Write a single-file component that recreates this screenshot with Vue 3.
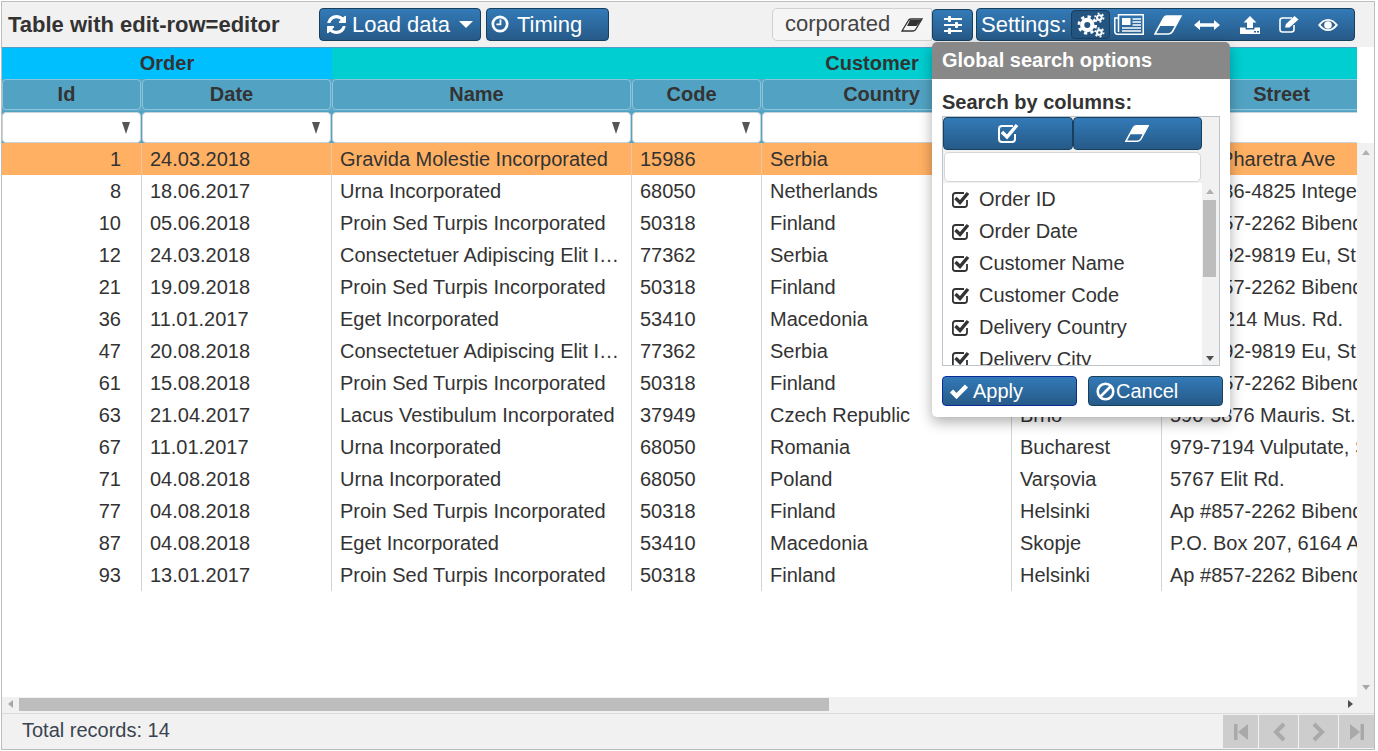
<script setup>
const rows = [
  ['1','24.03.2018','Gravida Molestie Incorporated','15986','Serbia','Belgrade','4321 Pharetra Ave'],
  ['8','18.06.2017','Urna Incorporated','68050','Netherlands','Amsterdam','Ap #686-4825 Integer Rd.'],
  ['10','05.06.2018','Proin Sed Turpis Incorporated','50318','Finland','Helsinki','Ap #857-2262 Bibendum Av.'],
  ['12','24.03.2018','Consectetuer Adipiscing Elit Incorporated','77362','Serbia','Belgrade','Ap #492-9819 Eu, St.'],
  ['21','19.09.2018','Proin Sed Turpis Incorporated','50318','Finland','Helsinki','Ap #857-2262 Bibendum Av.'],
  ['36','11.01.2017','Eget Incorporated','53410','Macedonia','Skopje','P.O. 1214 Mus. Rd.'],
  ['47','20.08.2018','Consectetuer Adipiscing Elit Incorporated','77362','Serbia','Belgrade','Ap #492-9819 Eu, St.'],
  ['61','15.08.2018','Proin Sed Turpis Incorporated','50318','Finland','Helsinki','Ap #857-2262 Bibendum Av.'],
  ['63','21.04.2017','Lacus Vestibulum Incorporated','37949','Czech Republic','Brno','590-5876 Mauris. St.'],
  ['67','11.01.2017','Urna Incorporated','68050','Romania','Bucharest','979-7194 Vulputate, St.'],
  ['71','04.08.2018','Urna Incorporated','68050','Poland','Varșovia','5767 Elit Rd.'],
  ['77','04.08.2018','Proin Sed Turpis Incorporated','50318','Finland','Helsinki','Ap #857-2262 Bibendum Av.'],
  ['87','04.08.2018','Eget Incorporated','53410','Macedonia','Skopje','P.O. Box 207, 6164 Amet Rd.'],
  ['93','13.01.2017','Proin Sed Turpis Incorporated','50318','Finland','Helsinki','Ap #857-2262 Bibendum Av.'],
]
const heads = ['Id','Date','Name','Code','Country','City','Street']
const options = ['Order ID','Order Date','Customer Name','Customer Code','Delivery Country','Delivery City']
</script>

<template>
  <div class="app">
    <header class="toolbar">
      <span class="title">Table with edit-row=editor</span>
      <button class="btn load">
        <svg class="ic" width="19" height="19" viewBox="0 0 1536 1536"><path fill="#fff" d="M1511 928q0 5-1 7-64 268-268 434.500t-478 166.500q-146 0-282.500-55t-243.500-157l-129 129q-19 19-45 19t-45-19-19-45v-448q0-26 19-45t45-19h448q26 0 45 19t19 45-19 45l-137 137q71 66 161 102t187 36q134 0 250-65t186-179q11-17 53-117 8-23 30-23h192q13 0 22.500 9.500t9.500 22.500zm25-800v448q0 26-19 45t-45 19h-448q-26 0-45-19t-19-45 19-45l138-138q-148-137-349-137-134 0-250 65t-186 179q-11 17-53 117-8 23-30 23h-199q-13 0-22.500-9.500t-9.500-22.500v-7q65-268 270-434.500t480-166.500q146 0 284 55.500t245 156.500l130-129q19-19 45-19t45 19 19 45z"/></svg>
        <span>Load data</span>
        <i class="caret"></i>
      </button>
      <button class="btn timing">
        <svg class="ic" width="18" height="18" viewBox="0 0 20 20"><circle cx="10" cy="10" r="8" fill="none" stroke="#fff" stroke-width="3"/><path d="M10.500 5v5.500H6" fill="none" stroke="#fff" stroke-width="2"/></svg>
        <span>Timing</span>
      </button>
      <div class="right">
        <div class="search">
          <span class="stext">corporated</span>
          <svg width="22" height="14" viewBox="0 0 22 14"><path d="M1 13 7 3 Q8 1 10 1H21L15 11Q14 13 12 13Z" fill="none" stroke="#333" stroke-width="1.300"/><path d="M6 8 9 2H20.500L15.500 8Z" fill="#333"/></svg>
        </div>
        <button class="btn sliders">
          <svg width="20" height="20" viewBox="0 0 20 20" fill="#fff"><rect x="1" y="3" width="18" height="2"/><rect x="1" y="9" width="18" height="2"/><rect x="1" y="15" width="18" height="2"/><rect x="5" y="1" width="3" height="6" rx=".8"/><rect x="12" y="7" width="3" height="6" rx=".8"/><rect x="5" y="13" width="3" height="6" rx=".8"/></svg>
        </button>
        <div class="btn settings">
          <span class="slabel">Settings:</span>
          <span class="gear-box">
            <svg width="28" height="26" viewBox="0 0 30 28" fill="none" stroke="#fff">
              <circle cx="11" cy="14" r="5.500" stroke-width="4.500"/>
              <circle cx="11" cy="14" r="9" stroke-width="3" stroke-dasharray="3.500 3.570"/>
              <circle cx="24" cy="6" r="2.500" stroke-width="2.200"/>
              <circle cx="24" cy="6" r="4.500" stroke-width="2" stroke-dasharray="2 2.700"/>
              <circle cx="24" cy="22" r="2.500" stroke-width="2.200"/>
              <circle cx="24" cy="22" r="4.500" stroke-width="2" stroke-dasharray="2 2.700"/>
            </svg>
          </span>
          <svg class="s-ic news" width="30" height="21" viewBox="0 0 30 21" fill="none" stroke="#fff" stroke-width="1.500">
            <path d="M4.500 .8H29.200V20.200H3.500Q.8 20.200 .8 17.500V4H4.500Z"/><path d="M4.500 4V18"/>
            <rect x="8" y="4" width="8.500" height="7" fill="#fff" stroke="none"/>
            <path d="M18.500 5H27M18.500 8H27M18.500 11H27M8 14H27M8 17H27"/>
          </svg>
          <svg class="s-ic eraser" width="28" height="20" viewBox="0 0 28 20"><path d="M1 19 9.500 3.500Q10.500 1 13 1H27L18.500 16.500Q17 19 14.500 19Z" fill="none" stroke="#fff" stroke-width="1.600"/><path d="M5.500 11 10 3Q11 1 13 1H27L21 11Z" fill="#fff"/></svg>
          <svg class="s-ic arrows" width="26" height="10" viewBox="0 0 26 10" fill="#fff"><path d="M0 5 6 0V3.300H20V0L26 5 20 10V6.700H6V10Z"/></svg>
          <svg class="s-ic upload" width="20" height="18" viewBox="0 0 20 18" fill="#fff"><path d="M10 0 16.500 6.500H13V12H7V6.500H3.500Z"/><path d="M0 11.500H5.500V13.500H14.500V11.500H20V18H0Z"/><rect x="14" y="15" width="2" height="1.500" fill="#2c6596"/><rect x="17" y="15" width="2" height="1.500" fill="#2c6596"/></svg>
          <svg class="s-ic edit" width="20" height="17" viewBox="0 0 20 17"><path d="M13 2H3.500Q1 2 1 4.500V13.500Q1 16 3.500 16H12.500Q15 16 15 13.500V9" fill="none" stroke="#fff" stroke-width="1.600"/><path d="M6 11.500 7 8 15.500 0 19.500 3.500 10.500 11.500Z" fill="#fff"/></svg>
          <svg class="s-ic eye" width="20" height="12" viewBox="0 0 20 12"><path d="M0 6Q4.500 0 10 0T20 6Q15.500 12 10 12T0 6Z" fill="#fff"/><path d="M2.500 6Q6 1.800 10 1.800T17.500 6Q14 10.200 10 10.200T2.500 6Z" fill="#2c6596"/><circle cx="10" cy="6" r="3.800" fill="#fff"/></svg>
        </div>
      </div>
    </header>

    <div class="body">
      <div class="viewport">
        <div class="table">
          <div class="groups">
            <div class="g order">Order</div>
            <div class="g customer">Customer</div>
          </div>
          <div class="cols heads">
            <div v-for="h in heads" :key="h" class="head">{{ h }}</div>
          </div>
          <div class="cols filters">
            <div v-for="h in heads" :key="h" class="filter"><i></i></div>
          </div>
          <div v-for="(r, i) in rows" :key="i" class="cols row" :class="{ selected: i === 0 }">
            <div v-for="(c, j) in r" :key="j" class="cell" :class="{ num: j === 0 }">{{ c }}</div>
          </div>
        </div>
      </div>
      <div class="vbar">
        <i class="up"></i>
        <i class="down"></i>
      </div>
    </div>

    <div class="hbar">
      <i class="left"></i>
      <div class="thumb"></div>
      <i class="rightarrow"></i>
    </div>

    <footer class="footer">
      <span class="total">Total records: 14</span>
      <div class="pager">
        <span class="pg first"><svg width="16" height="18" viewBox="0 0 16 18" fill="#a9a9a9"><rect x="1" y="1" width="3.500" height="16"/><path d="M15 1V17L5 9Z"/></svg></span>
        <span class="pg prev"><svg width="14" height="20" viewBox="0 0 14 20" fill="none" stroke="#a9a9a9" stroke-width="4"><path d="M12 2 4 10 12 18"/></svg></span>
        <span class="pg next"><svg width="14" height="20" viewBox="0 0 14 20" fill="none" stroke="#a9a9a9" stroke-width="4"><path d="M2 2 10 10 2 18"/></svg></span>
        <span class="pg last"><svg width="16" height="18" viewBox="0 0 16 18" fill="#a9a9a9"><path d="M1 1V17L11 9Z"/><rect x="11.500" y="1" width="3.500" height="16"/></svg></span>
      </div>
    </footer>

    <div class="popup">
      <div class="p-head">Global search options</div>
      <div class="p-body">
        <div class="p-label">Search by columns:</div>
        <div class="box">
          <div class="box-main">
            <div class="box-btns">
              <button class="btn bb">
                <svg width="22" height="21" viewBox="0 0 22 21"><path d="M16 3H5Q2 3 2 6V16Q2 19 5 19H15Q18 19 18 16V11" fill="none" stroke="#fff" stroke-width="2"/><path d="M5 9 10 14 20 2" fill="none" stroke="#fff" stroke-width="3.500"/></svg>
              </button>
              <button class="btn bb">
                <svg width="24" height="17" viewBox="0 0 28 20"><path d="M1 19 9.500 3.500Q10.500 1 13 1H27L18.500 16.500Q17 19 14.500 19Z" fill="none" stroke="#fff" stroke-width="1.800"/><path d="M5.500 11 10 3Q11 1 13 1H27L21 11Z" fill="#fff"/></svg>
              </button>
            </div>
            <div class="box-input"></div>
            <div class="list-wrap">
              <div class="list">
                <label v-for="o in options" :key="o" class="opt">
                  <svg width="18" height="17" viewBox="0 0 18 17"><path d="M12 2H3.500Q.9 2 .9 4.500V13.500Q.9 16 3.500 16H12.500Q15 16 15 13.500V9" fill="none" stroke="#333" stroke-width="1.800"/><path d="M3.500 7 8 11.500 16 2" fill="none" stroke="#333" stroke-width="3.400"/></svg>
                  <span>{{ o }}</span>
                </label>
              </div>
              <div class="lbar"><i class="up"></i><div class="lthumb"></div><i class="down"></i></div>
            </div>
          </div>
        </div>
        <div class="p-actions">
          <button class="btn act apply">
            <svg width="20" height="16" viewBox="0 0 20 16"><path d="M2.500 8 7.500 13 17.500 3" fill="none" stroke="#fff" stroke-width="4.500"/></svg>
            <span>Apply</span>
          </button>
          <button class="btn act cancel">
            <svg width="19" height="19" viewBox="0 0 19 19" fill="none" stroke="#fff" stroke-width="2.600"><circle cx="9.500" cy="9.500" r="7.800"/><path d="M4 15 15 4"/></svg>
            <span>Cancel</span>
          </button>
        </div>
      </div>
    </div>
  </div>
</template>

<style>
html, body { margin: 0; background: #fff; overflow: hidden; }
</style>

<style scoped>
* { box-sizing: border-box; }
.app {
  position: relative;
  width: 1374px;
  height: 749px;
  margin: 1px 0 0 1px;
  border: 1px solid #bdbdbd;
  font: 20px "Liberation Sans", Arial, sans-serif;
  color: #333;
  display: flex;
  flex-direction: column;
  overflow: hidden;
  background: #fff;
}
.btn {
  display: flex;
  align-items: center;
  border: 1px solid #17405f;
  border-radius: 4px;
  background: linear-gradient(#337ab7, #265a88);
  color: #fff;
  font: 22px "Liberation Sans", Arial, sans-serif;
  padding: 0;
  margin: 0;
}
.toolbar {
  height: 45px;
  flex: none;
  display: flex;
  align-items: flex-start;
  background: #f1f1f1;
  padding: 6px 0 0 6px;
}
.title { font-weight: bold; font-size: 22px; width: 311px; white-space: nowrap; line-height: 33px; }
.load { width: 162px; height: 33px; padding-left: 7px; }
.load span { margin-left: 6px; }
.caret {
  width: 0; height: 0; margin-left: 9px;
  border-left: 7px solid transparent; border-right: 7px solid transparent; border-top: 7px solid #fff;
}
.timing { width: 123px; height: 33px; margin-left: 5px; padding-left: 4px; }
.timing svg { margin-bottom: 2px; }
.timing span { margin-left: 8px; }
.right { margin-left: auto; display: flex; align-items: center; margin-right: 19px; }
.search {
  width: 160px; height: 33px;
  display: flex; align-items: center;
  padding-left: 12px;
  background: #f5f5f5;
  border: 1px solid #d0d0d0;
  border-radius: 5px 0 0 5px;
  font-size: 22px;
  color: #444;
}
.stext { width: 116px; margin-bottom: 2px; }
.sliders { width: 41px; height: 32px; margin-left: 0; justify-content: center; }
.settings { width: 379px; height: 33px; margin-left: 3px; padding-left: 4px; }
.slabel { width: 90px; }
.gear-box {
  width: 39px; height: 29px;
  display: flex; align-items: center; justify-content: center;
  background: #245580;
  border: 1px solid #1a3f5e;
  border-radius: 4px;
}
.news { margin-left: 4px; }
.eraser { margin-left: 10px; }
.arrows { margin-left: 12px; }
.upload { margin-left: 20px; }
.edit { margin-left: 19px; }
.eye { margin-left: 19px; }

.body { flex: 1; min-height: 0; display: flex; }
.viewport { width: 1355px; overflow: hidden; }
.table { width: 1410px; }
.groups { display: grid; grid-template-columns: 330px 1080px; height: 32px; border-top: 1px solid #4f9fc5; }
.g { font-weight: bold; text-align: center; line-height: 30px; }
.order { background: #00bfff; }
.customer { background: #00ced1; }
.cols { display: grid; grid-template-columns: 140px 190px 300px 130px 250px 150px 250px; }
.heads { background: #5ba8c8; height: 32px; }
.head {
  background: #52a3c3;
  border: 1px solid #8ec4da;
  border-radius: 4px;
  font-weight: bold;
  text-align: center;
  line-height: 28px;
  height: 31px;
  margin-right: 1px;
  padding-right: 10px;
}
.filters { background: #52a3c3; height: 32px; }
.filter {
  position: relative;
  background: #fff;
  border: 1px solid #c9d3da;
  border-radius: 4px;
  margin: 1px 1px 0 0;
  height: 31px;
}
.filter i {
  position: absolute; right: 10px; top: 9px;
  width: 0; height: 0;
  border-left: 4px solid transparent; border-right: 4px solid transparent; border-top: 12px solid #555;
}
.row { height: 32px; }
.selected { background: #ffb062; }
.cell {
  padding: 0 10px 0 8px;
  line-height: 32px;
  white-space: nowrap;
  overflow: hidden;
  text-overflow: ellipsis;
  border-right: 1px solid #d3d3d3;
}
.selected .cell { border-right-color: #e8c7a4; }
.num { text-align: right; padding-right: 20px; }

.vbar { flex: 1; position: relative; background: linear-gradient(#fff 0, #fff 96px, #f1f1f1 96px); }
.vbar i { position: absolute; left: 5px; width: 0; height: 0; border-left: 4px solid transparent; border-right: 4px solid transparent; }
.vbar .up { top: 103px; border-bottom: 5px solid #b0b0b0; }
.vbar .down { bottom: 7px; border-top: 5px solid #a8a8a8; }

.hbar { height: 16px; flex: none; background: #f1f1f1; position: relative; padding: 1px 0 0 17px; }
.thumb { width: 810px; height: 13px; background: #bdbdbd; }
.hbar i { position: absolute; top: 3px; width: 0; height: 0; border-top: 4px solid transparent; border-bottom: 4px solid transparent; }
.left { left: 6px; border-right: 5px solid #a8a8a8; }
.rightarrow { right: 21px; border-left: 5px solid #505050; }

.footer {
  height: 36px; flex: none;
  display: flex; align-items: center; justify-content: space-between;
  background: #f1f1f1;
  border-top: 1px solid #dcdcdc;
  padding-left: 20px;
}
.total { font-size: 20px; color: #3a4450; margin-bottom: 3px; }
.pager { display: flex; gap: 1px; height: 33px; }
.pg { display: flex; align-items: center; justify-content: center; background: #cdcdcd; height: 33px; }
.first { width: 35px; }
.prev { width: 39px; }
.next { width: 39px; }
.last { width: 35px; }

.popup {
  position: absolute;
  left: 930px; top: 40px;
  width: 298px; height: 375px;
  background: #fff;
  border-radius: 5px;
  box-shadow: 0 5px 14px rgba(0,0,0,.32);
  overflow: hidden;
}
.p-head {
  height: 37px;
  background: #888;
  color: #fff;
  font-weight: bold;
  line-height: 36px;
  padding-left: 10px;
}
.p-body { padding: 0 0 0 10px; }
.p-label { font-weight: bold; margin-top: 12px; height: 25px; line-height: 23px; }
.box {
  width: 278px; height: 250px;
  border: 1px solid #bcc4cc;
  background: #f1f1f1;
}
.box-main { width: 259px; }
.box-btns { display: flex; height: 33px; }
.bb { width: 129.500px; height: 33px; justify-content: center; flex: none; }
.box-input {
  height: 30px; margin: 2px 1px 1px;
  width: 257px;
  background: #fff;
  border: 1px solid #d6d6d6;
  border-radius: 5px;
}
.list-wrap { display: flex; width: 276px; height: 182px; }
.list { width: 259px; background: #fff; overflow: hidden; flex: none; }
.opt { display: flex; align-items: center; height: 32px; padding-left: 9px; white-space: nowrap; color: #333; }
.opt svg { margin-right: 9px; }
.lbar { width: 17px; background: #f1f1f1; position: relative; }
.lbar i { position: absolute; left: 4px; width: 0; height: 0; border-left: 4px solid transparent; border-right: 4px solid transparent; }
.lbar .up { top: 6px; border-bottom: 5px solid #b0b0b0; }
.lbar .down { bottom: 4px; border-top: 5px solid #505050; }
.lthumb { position: absolute; left: 1px; top: 17px; width: 13px; height: 77px; background: #bdbdbd; }
.p-actions { display: flex; gap: 11px; margin-top: 10px; }
.act { width: 135px; height: 30px; font-size: 20px; padding-left: 6px; flex: none; }
.act span { margin-left: 4px; }
.apply { border-color: #0a2a9a; }
.cancel { padding-left: 7px; }
.cancel span { margin-left: 1px; }
</style>
